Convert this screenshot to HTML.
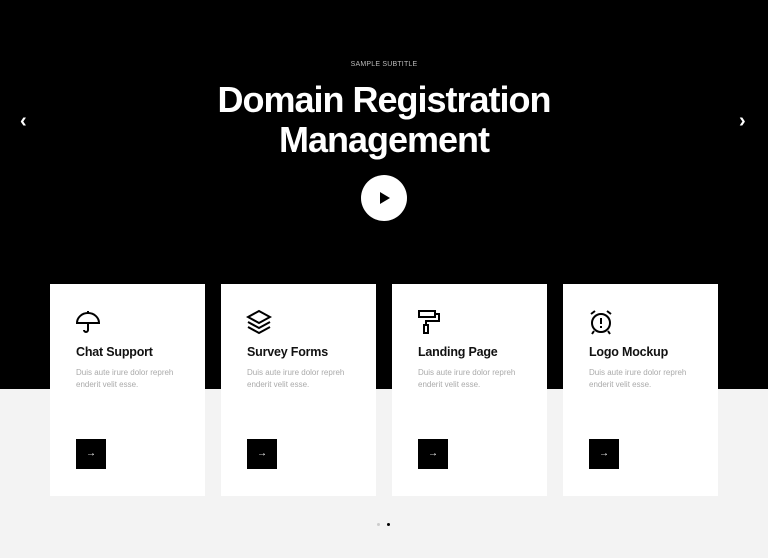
<!DOCTYPE html>
<html><head><style>
*{margin:0;padding:0;box-sizing:border-box}
body{width:768px;height:558px;background:#f3f3f3;font-family:"Liberation Sans",sans-serif;position:relative;overflow:hidden}
.hero{position:absolute;left:0;top:0;width:768px;height:389px;background:#000}
.sub{position:absolute;top:61px;width:768px;text-align:center;color:#bbb;font-size:7px;letter-spacing:.2px}
h1{position:absolute;top:80px;width:768px;text-align:center;color:#fff;font-size:36px;line-height:40px;font-weight:bold;letter-spacing:-1px}
.play{position:absolute;left:361px;top:175px;width:46px;height:46px;border-radius:50%;background:#fff}
.play:after{content:"";position:absolute;left:19px;top:17px;border-left:10px solid #000;border-top:6px solid transparent;border-bottom:6px solid transparent}
.arr{position:absolute;top:110px;color:#fff;font-size:20px;font-weight:bold}
.card{position:absolute;top:284px;width:155px;height:212px;background:#fff}
.card svg{position:absolute;left:25px;top:25px}
.card h3{position:absolute;left:26px;top:61px;font-size:12.5px;color:#111;letter-spacing:-.2px}
.card p{position:absolute;left:26px;top:83px;width:115px;font-size:8px;line-height:12px;color:#aaa}
.btn{position:absolute;left:26px;top:155px;width:30px;height:30px;background:#000;color:#fff;font-size:10px;text-align:center;line-height:30px;font-weight:bold}
.dot{position:absolute;top:523px;width:3px;height:3px;border-radius:50%}
</style></head><body>
<div class="hero">
<div class="sub">SAMPLE SUBTITLE</div>
<h1>Domain Registration<br>Management</h1>
<div class="play"></div>
<div class="arr" style="left:20px">&#8249;</div>
<div class="arr" style="left:739px">&#8250;</div>
</div>
<div class="card" style="left:50px">
<svg width="26" height="26" viewBox="0 0 26 26" fill="none" stroke="#000" stroke-width="2"><path d="M13 2v2M2 14a11 10 0 0 1 22 0zM13 14v7a2 2 0 0 1-4 0"/></svg>
<h3>Chat Support</h3><p>Duis aute irure dolor repreh enderit velit esse.</p><div class="btn">&#8594;</div></div>
<div class="card" style="left:221px">
<svg width="26" height="26" viewBox="0 0 26 26" fill="none" stroke="#000" stroke-width="2"><path d="M13 2L2 8l11 6 11-6zM2 13l11 6 11-6M2 18l11 6 11-6"/></svg>
<h3>Survey Forms</h3><p>Duis aute irure dolor repreh enderit velit esse.</p><div class="btn">&#8594;</div></div>
<div class="card" style="left:392px">
<svg width="26" height="26" viewBox="0 0 26 26" fill="none" stroke="#000" stroke-width="2"><path d="M2 2h16v6H2zM18 5h4v7H9v4M7 16h4v8H7z"/></svg>
<h3>Landing Page</h3><p>Duis aute irure dolor repreh enderit velit esse.</p><div class="btn">&#8594;</div></div>
<div class="card" style="left:563px">
<svg width="26" height="26" viewBox="0 0 26 26" fill="none" stroke="#000" stroke-width="2"><circle cx="13" cy="14" r="9"/><path d="M13 9v6M13 17v2M3 5l4-3M23 5l-4-3M6 22l-2 3M20 22l2 3"/></svg>
<h3>Logo Mockup</h3><p>Duis aute irure dolor repreh enderit velit esse.</p><div class="btn">&#8594;</div></div>
<div class="dot" style="left:377px;background:#ccc"></div>
<div class="dot" style="left:387px;background:#000"></div>
</body></html>
